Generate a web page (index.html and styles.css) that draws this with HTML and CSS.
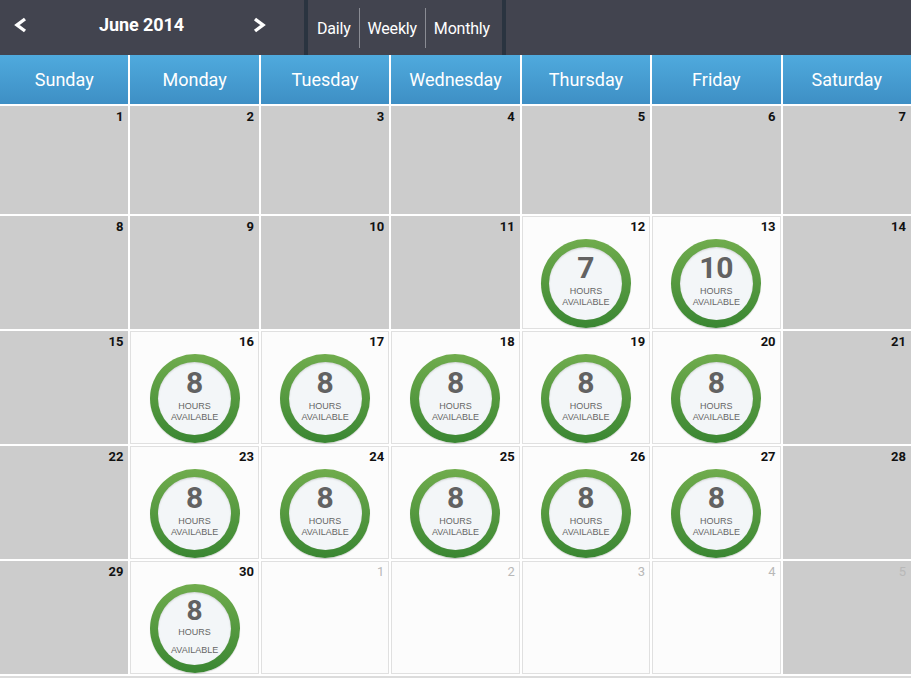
FILE: index.html
```html
<!DOCTYPE html>
<html>
<head>
<meta charset="utf-8">
<link rel="stylesheet" href="styles.css">
</head>
<body>
<div class="topbar">
  <div class="month-nav">
    <span class="chev"><svg width="16" height="16" viewBox="0 0 16 16"><polyline points="12,2 4,8 12,14" fill="none" stroke="#fff" stroke-width="3.4" stroke-linejoin="miter"/></svg></span>
    <span class="month">June 2014</span>
    <span class="chev"><svg width="16" height="16" viewBox="0 0 16 16"><polyline points="4,2 12,8 4,14" fill="none" stroke="#fff" stroke-width="3.4" stroke-linejoin="miter"/></svg></span>
  </div>
  <div class="views">
    <span class="view">Daily</span>
    <span class="view">Weekly</span>
    <span class="view">Monthly</span>
  </div>
  <div class="rest"></div>
</div>
<div class="calendar">
  <div class="dayname">Sunday</div>
  <div class="dayname">Monday</div>
  <div class="dayname">Tuesday</div>
  <div class="dayname">Wednesday</div>
  <div class="dayname">Thursday</div>
  <div class="dayname">Friday</div>
  <div class="dayname">Saturday</div>

  <div class="cell off"><span class="num">1</span></div>
  <div class="cell off"><span class="num">2</span></div>
  <div class="cell off"><span class="num">3</span></div>
  <div class="cell off"><span class="num">4</span></div>
  <div class="cell off"><span class="num">5</span></div>
  <div class="cell off"><span class="num">6</span></div>
  <div class="cell off"><span class="num">7</span></div>

  <div class="cell off"><span class="num">8</span></div>
  <div class="cell off"><span class="num">9</span></div>
  <div class="cell off"><span class="num">10</span></div>
  <div class="cell off"><span class="num">11</span></div>
  <div class="cell on"><span class="num">12</span><div class="ring"><div class="inner"><span class="hrs">7</span><span class="lbl">HOURS</span><span class="lbl">AVAILABLE</span></div></div></div>
  <div class="cell on"><span class="num">13</span><div class="ring"><div class="inner"><span class="hrs">10</span><span class="lbl">HOURS</span><span class="lbl">AVAILABLE</span></div></div></div>
  <div class="cell off"><span class="num">14</span></div>

  <div class="cell off"><span class="num">15</span></div>
  <div class="cell on"><span class="num">16</span><div class="ring"><div class="inner"><span class="hrs">8</span><span class="lbl">HOURS</span><span class="lbl">AVAILABLE</span></div></div></div>
  <div class="cell on"><span class="num">17</span><div class="ring"><div class="inner"><span class="hrs">8</span><span class="lbl">HOURS</span><span class="lbl">AVAILABLE</span></div></div></div>
  <div class="cell on"><span class="num">18</span><div class="ring"><div class="inner"><span class="hrs">8</span><span class="lbl">HOURS</span><span class="lbl">AVAILABLE</span></div></div></div>
  <div class="cell on"><span class="num">19</span><div class="ring"><div class="inner"><span class="hrs">8</span><span class="lbl">HOURS</span><span class="lbl">AVAILABLE</span></div></div></div>
  <div class="cell on"><span class="num">20</span><div class="ring"><div class="inner"><span class="hrs">8</span><span class="lbl">HOURS</span><span class="lbl">AVAILABLE</span></div></div></div>
  <div class="cell off"><span class="num">21</span></div>

  <div class="cell off"><span class="num">22</span></div>
  <div class="cell on"><span class="num">23</span><div class="ring"><div class="inner"><span class="hrs">8</span><span class="lbl">HOURS</span><span class="lbl">AVAILABLE</span></div></div></div>
  <div class="cell on"><span class="num">24</span><div class="ring"><div class="inner"><span class="hrs">8</span><span class="lbl">HOURS</span><span class="lbl">AVAILABLE</span></div></div></div>
  <div class="cell on"><span class="num">25</span><div class="ring"><div class="inner"><span class="hrs">8</span><span class="lbl">HOURS</span><span class="lbl">AVAILABLE</span></div></div></div>
  <div class="cell on"><span class="num">26</span><div class="ring"><div class="inner"><span class="hrs">8</span><span class="lbl">HOURS</span><span class="lbl">AVAILABLE</span></div></div></div>
  <div class="cell on"><span class="num">27</span><div class="ring"><div class="inner"><span class="hrs">8</span><span class="lbl">HOURS</span><span class="lbl">AVAILABLE</span></div></div></div>
  <div class="cell off"><span class="num">28</span></div>

  <div class="cell off"><span class="num">29</span></div>
  <div class="cell on"><span class="num">30</span><div class="ring"><div class="inner wide"><span class="hrs">8</span><span class="lbl">HOURS</span><span class="lbl">AVAILABLE</span></div></div></div>
  <div class="cell on next"><span class="num">1</span></div>
  <div class="cell on next"><span class="num">2</span></div>
  <div class="cell on next"><span class="num">3</span></div>
  <div class="cell on next"><span class="num">4</span></div>
  <div class="cell off next"><span class="num">5</span></div>
</div>
</body>
</html>
```
FILE: styles.css
```css
html, body {
  margin: 0;
  padding: 0;
  background: #ffffff;
  font-family: Roboto, "Liberation Sans", Arial, sans-serif;
}

.topbar {
  display: flex;
  height: 55px;
  background: #42444f;
  color: #ffffff;
}

.month-nav {
  width: 308px;
  display: flex;
  align-items: center;
  justify-content: space-between;
  padding: 0 37px 6px 13px;
  box-sizing: border-box;
  border-right: 4px solid #2a3440;
}

.chev {
  display: flex;
  width: 16px;
  height: 16px;
}

.month {
  font-weight: 700;
  font-size: 18px;
  letter-spacing: -0.1px;
  margin-left: 3px;
}

.views {
  display: flex;
  align-items: center;
  width: 198px;
  box-sizing: border-box;
  border-right: 4px solid #2a3440;
  padding-left: 1px;
}

.view {
  font-size: 16px;
  letter-spacing: -0.2px;
  padding: 0 8px 0 8px;
  height: 40px;
  line-height: 41px;
  border-left: 1px solid #8a8c94;
}

.view:first-child {
  border-left: none;
}

.rest {
  flex: 1;
}

.calendar {
  display: grid;
  grid-template-columns: repeat(7, 1fr);
  grid-template-rows: 49px 108px 113px 113px 113px 113px;
  column-gap: 2px;
  row-gap: 2px;
  border-bottom: 2px solid #dcdcdc;
  padding-bottom: 2px;
  background: #ffffff;
}

.dayname {
  background: linear-gradient(#4faadd, #3e8fc5);
  color: #ffffff;
  font-size: 18px;
  display: flex;
  align-items: center;
  justify-content: center;
  padding-bottom: 1px;
}

.cell {
  display: flex;
  flex-direction: column;
  align-items: center;
  box-sizing: border-box;
}

.cell.off {
  background: #cccccc;
}

.cell.on {
  background: #fcfcfc;
  border: 1px solid #e0e0e0;
}

.num {
  align-self: flex-end;
  font-size: 13px;
  font-weight: 700;
  color: #111111;
  padding: 4px 5px 0 0;
  line-height: 14px;
}

.cell.on .num {
  padding: 3px 4px 0 0;
}

.cell.next .num {
  font-weight: 400;
  color: #b8b8b8;
}

.ring {
  margin-top: 5px;
  width: 90px;
  height: 90px;
  border-radius: 50%;
  background: linear-gradient(#70ac4d, #3a8632);
  display: flex;
  align-items: center;
  justify-content: center;
  box-shadow: 0 1px 1px rgba(0,0,0,0.15);
}

.inner {
  width: 73px;
  height: 73px;
  border-radius: 50%;
  background: #f3f6f8;
  display: flex;
  flex-direction: column;
  align-items: center;
  color: #636363;
  box-shadow: inset 0 1px 2px rgba(0,0,0,0.15);
}

.hrs {
  font-size: 30px;
  font-weight: 700;
  line-height: 30px;
  margin-top: 6px;
  color: #626262;
}

.lbl {
  font-size: 9px;
  line-height: 11px;
  font-family: "Liberation Sans", Arial, sans-serif;
  color: #666666;
}

.hrs + .lbl {
  margin-top: 3px;
}

.inner.wide .hrs {
  font-size: 28px;
  margin-top: 8px;
  line-height: 21px;
}

.inner.wide .hrs + .lbl {
  margin-top: 6px;
}

.inner.wide .lbl + .lbl {
  margin-top: 7px;
}
```
